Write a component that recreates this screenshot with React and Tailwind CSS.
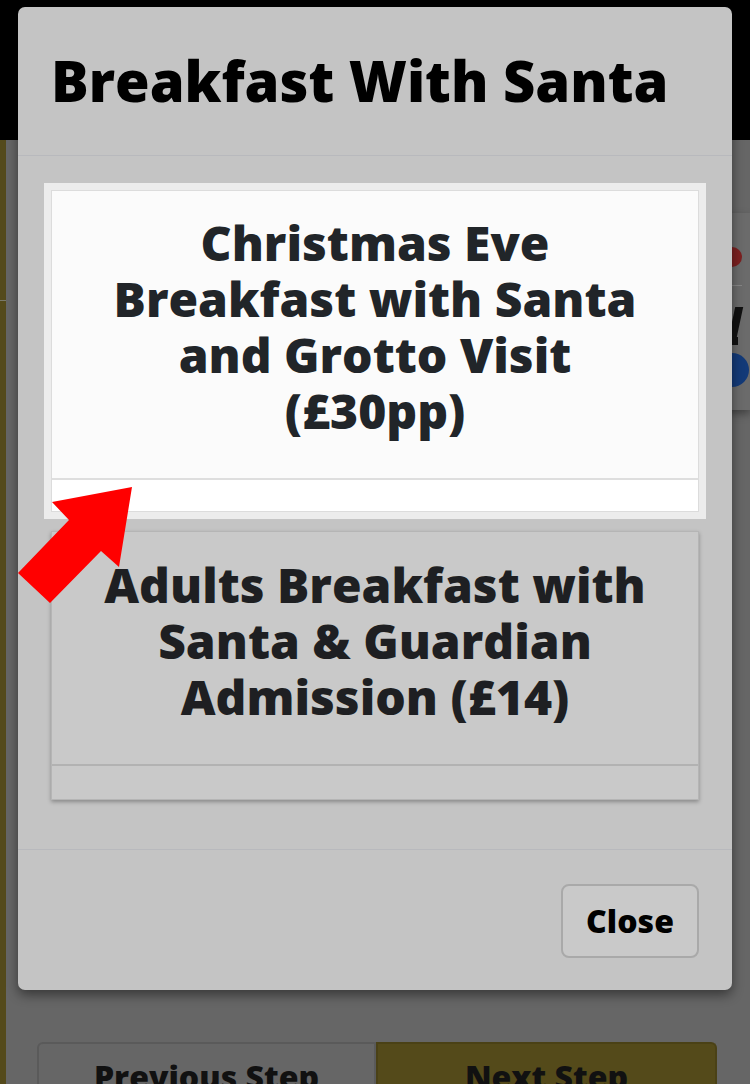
export default function App() {
  return (
    <div className="relative w-[750px] h-[1084px] overflow-hidden bg-[#666666] font-['Open_Sans',sans-serif]">
      {/* background page (dimmed) */}
      <div className="flex flex-col h-full">
        <div className="h-[140px] shrink-0 bg-black" />
        <div className="flex flex-1">
          <div className="w-[6px] shrink-0 bg-[#544a1b] flex flex-col">
            <div className="h-[160px]" />
            <div className="h-px bg-[#7a7a6a]" />
          </div>
          <div className="flex-1 flex flex-col pl-[31px] pr-[5px] pt-[902px]">
            <div className="flex w-[680px]">
              <div className="w-[339px] h-[60px] bg-[#666666] border-2 border-b-0 border-[#5a5a5a] rounded-tl-[6px] flex justify-center pt-[17px] text-[32px] font-extrabold text-[#111] leading-none whitespace-nowrap">
                Previous Step
              </div>
              <div className="w-[341px] h-[60px] bg-[#544a1a] border-2 border-b-0 border-[#4a4116] rounded-tr-[6px] flex justify-center pt-[17px] text-[32px] font-extrabold text-[#111] leading-none whitespace-nowrap">
                Next Step
              </div>
            </div>
          </div>
          <div className="w-[28px] shrink-0 flex flex-col pt-[73px]">
            <div className="h-[197px] bg-[#6b6b6b] shadow-[0_4px_8px_rgba(0,0,0,0.35)] flex flex-col items-start pt-[34px]">
              <div className="w-[20px] h-[20px] rounded-full bg-[#7c2020]" />
              <div className="mt-[18px] w-[20px] h-px bg-[#858585]" />
              <div className="mt-[21px] ml-[10px] w-[8px] h-[30px] bg-[#111] -skew-x-12" />
              <div className="ml-[10px] w-[6px] h-[8px] bg-[#111]" />
              <div className="mt-[8px] -ml-[7px] w-[34px] h-[34px] rounded-full bg-[#133a78]" />
            </div>
          </div>
        </div>
      </div>

      {/* modal */}
      <div className="absolute left-[18px] top-[7px] w-[714px] rounded-[7px] bg-[#c4c4c4] shadow-[0_5px_12px_rgba(0,0,0,0.45)] flex flex-col">
        <div className="h-[149px] px-[33px] pb-[3px] flex items-center border-b border-[#b8b9bd]">
          <h1 className="text-[56px] font-extrabold text-black leading-none whitespace-nowrap">Breakfast With Santa</h1>
        </div>
        <div className="px-[33px] pt-[34px] pb-[49px] flex flex-col gap-[19px] border-b border-[#b8b9bd]">
          <div className="h-[322px] flex flex-col bg-[#fbfbfb] border border-[#dcdcdc] shadow-[0_0_0_7px_#ececec]">
            <div className="flex-1 flex items-start justify-center pt-[24px] px-[6px]">
              <div className="text-center text-[48px] font-extrabold leading-[56px] text-[#212529] whitespace-nowrap">
                Christmas Eve<br />Breakfast with Santa<br />and Grotto Visit<br />(£30pp)
              </div>
            </div>
            <div className="h-[33px] bg-white border-t-2 border-[#dedede]" />
          </div>
          <div className="h-[269px] flex flex-col bg-[#c9c9c9] border border-[#b5b5b5] shadow-[0_2px_4px_rgba(0,0,0,0.3)]">
            <div className="flex-1 flex items-start justify-center pt-[25px] px-[6px]">
              <div className="text-center text-[48px] font-extrabold leading-[56px] text-[#1e1f22] whitespace-nowrap">
                Adults Breakfast with<br />Santa &amp; Guardian<br />Admission (£14)
              </div>
            </div>
            <div className="h-[35px] border-t-2 border-[#b2b2b2]" />
          </div>
        </div>
        <div className="pt-[34px] pb-[32px] px-[33px] flex justify-end">
          <button className="w-[138px] h-[74px] rounded-[8px] border-2 border-[#a9a9a9] bg-[#c9c9c9] text-[32px] font-extrabold text-black leading-none">
            Close
          </button>
        </div>
      </div>

      {/* red arrow annotation */}
      <svg className="absolute left-0 top-0" width="750" height="1084" viewBox="0 0 750 1084">
        <polygon points="132,487 52,502 69,520 18,573 50,603 101,551 119,567" fill="#ff0000" />
      </svg>
    </div>
  );
}
